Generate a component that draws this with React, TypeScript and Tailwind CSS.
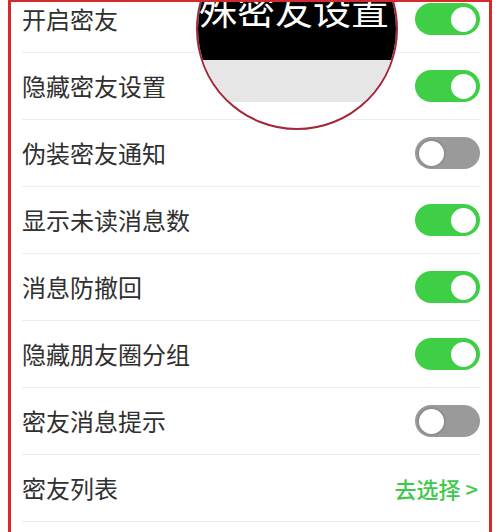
import React from "react";

type Row = {
  label: string;
  on?: boolean;
  link?: string;
};

const ROWS: Row[] = [
  { label: "开启密友", on: true },
  { label: "隐藏密友设置", on: true },
  { label: "伪装密友通知", on: false },
  { label: "显示未读消息数", on: true },
  { label: "消息防撤回", on: true },
  { label: "隐藏朋友圈分组", on: true },
  { label: "密友消息提示", on: false },
  { label: "密友列表", link: "去选择 >" },
];

function Toggle({ on }: { on: boolean }) {
  return (
    <span
      className={`flex h-[32px] w-[65px] items-center rounded-full px-[2px] ${
        on ? "justify-end bg-[#3fcf46]" : "justify-start bg-[#9a9a9a]"
      }`}
    >
      <span
        className={`h-[29px] w-[29px] rounded-full border-2 bg-white ${
          on ? "border-[#3fcf46]" : "border-[#8f8f8f]"
        }`}
      />
    </span>
  );
}

export default function App() {
  return (
    <div
      className="h-[532px] w-[500px] overflow-hidden bg-white"
      style={{ fontFamily: '"Noto Sans CJK SC", "Noto Sans", sans-serif' }}
    >
      <div className="relative ml-[8px] h-full w-[484px] overflow-hidden border-x-[3px] border-t-2 border-[#d42a2a]">
        {/* settings list */}
        <div className="-mt-[16px] pl-[11px] pr-[9px]">
          {ROWS.map((row) => (
            <div
              key={row.label}
              className="flex h-[67px] items-center justify-between border-b border-[#ececec]"
            >
              <span className="text-[24px] leading-none text-[#303030]">{row.label}</span>
              {row.link ? (
                <span className="mr-[2px] text-[22px] font-medium leading-none text-[#3dc94a]">
                  {row.link}
                </span>
              ) : (
                <Toggle on={!!row.on} />
              )}
            </div>
          ))}
        </div>

        {/* magnifier circle */}
        <div className="absolute -top-[74px] left-[185px] h-[202px] w-[202px] overflow-hidden rounded-full border-2 border-[#a52838] bg-white">
          <div className="h-[130px] bg-black" />
          <div className="h-[42px] bg-[#e6e6e6]" />
          <span className="absolute left-[-37px] top-[59px] whitespace-nowrap text-[38px] leading-none text-white">
            特殊密友设置
          </span>
        </div>
      </div>
    </div>
  );
}
